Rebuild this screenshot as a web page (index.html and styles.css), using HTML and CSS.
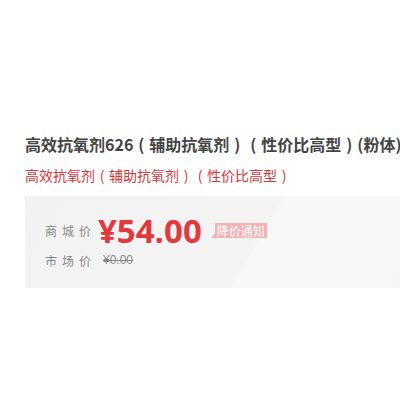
FILE: index.html
```html
<!DOCTYPE html>
<html lang="zh-CN">
  <head>
    <meta charset="UTF-8" />
    <meta name="viewport" content="width=device-width, initial-scale=1.0" />
    <title>高效抗氧剂626</title>
    <link rel="stylesheet" href="styles.css">
  </head>
  <body>
    <div class="product">
      <!-- full-width brackets centred in their cell, like the shop font -->
      <h1 class="product-name">高效抗氧剂626<span class="fw">(</span>辅助抗氧剂<span class="fw">)</span><span class="fw">(</span>性价比高型<span class="fw">)</span>(粉体)</h1>
      <p class="product-sub">高效抗氧剂<span class="fw">(</span>辅助抗氧剂<span class="fw">)</span><span class="fw">(</span>性价比高型<span class="fw">)</span></p>

      <div class="price-box">
        <div class="price-row">
          <span class="label">商城价</span>
          <span class="price">¥54.00</span>
          <span class="notice">降价通知</span>
        </div>
        <div class="price-row market">
          <span class="label">市场价</span>
          <del class="old-price">¥0.00</del>
        </div>
      </div>
    </div>
  </body>
</html>
```

FILE: styles.css
```css
* {
  margin: 0;
  padding: 0;
  box-sizing: border-box;
  font-family: "Noto Sans CJK SC", "Noto Sans", sans-serif;
}

body {
  background-color: white;
  overflow: hidden;
}

.product {
  padding: 132px 0 0 25px;
  white-space: nowrap;
  overflow: hidden;
}

.fw {
  display: inline-block;
  width: 1em;
  text-align: center;
}

.product-name {
  font-size: 16px;
  line-height: 24px;
  font-weight: bold;
  color: #444;
}

.product-sub {
  margin-top: 9px;
  font-size: 14px;
  line-height: 20px;
  color: #d0393b;
}

.price-box {
  margin-top: 11px;
  padding: 14px 0 18px 20px;
  background: linear-gradient(120deg, #f2f2f2 0%, #f4f4f4 60%, #f7f7f7 61%, #f6f6f6 100%);
}

.price-row {
  display: flex;
  align-items: center;
  height: 40px;
}

.price-row.market {
  height: 20px;
}

.label {
  width: 58px;
  font-size: 12px;
  letter-spacing: 5px;
  color: #888;
}

.price {
  margin-left: -5px;
  font-family: "Open Sans", sans-serif;
  font-size: 33px;
  font-weight: bold;
  color: #e4393c;
}

.notice {
  position: relative;
  margin-left: 13px;
  padding: 0 2px;
  font-size: 12px;
  line-height: 15px;
  color: #fff;
  background-color: #f1b3b5;
}

.notice::before {
  content: "";
  position: absolute;
  left: -4px;
  bottom: 0;
  border-bottom: 5px solid #f1b3b5;
  border-left: 4px solid transparent;
}

.old-price {
  font-family: "Liberation Sans", sans-serif;
  font-size: 12px;
  color: #888;
}
```
